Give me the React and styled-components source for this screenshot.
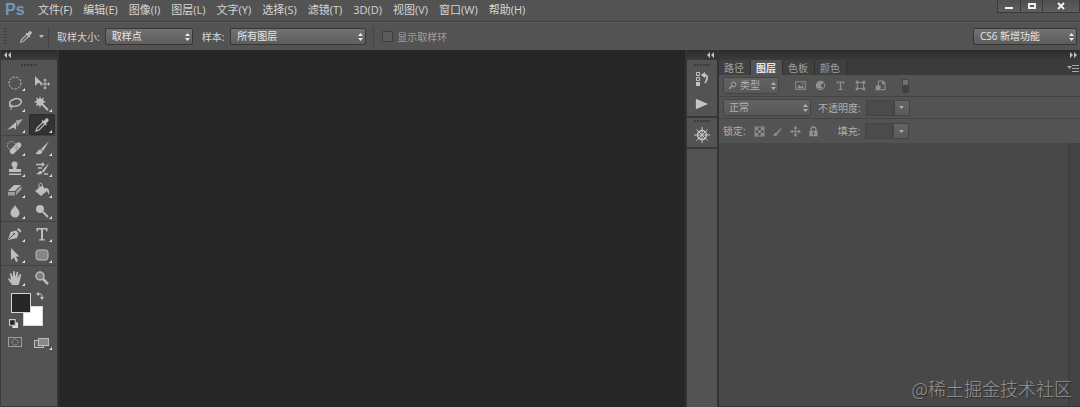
import React from "react";
import styled, { createGlobalStyle, css } from "styled-components";

const GlobalStyle = createGlobalStyle`
  * {
    box-sizing: border-box;
  }
  body {
    margin: 0;
    background-color: #262626;
    color: #d6d6d6;
    font-family: "Open Sans", "Noto Sans CJK SC", sans-serif;
    font-size: 10px;
    line-height: 16px;
  }
  button, select, input {
    font: inherit;
    color: inherit;
    margin: 0;
  }
  svg {
    display: block;
  }
`;

const Page = styled.div`
  min-height: 100vh;
  display: flex;
  flex-direction: column;
`;

const MenuBar = styled.header`
  height: 22px;
  display: flex;
  align-items: flex-start;
  justify-content: space-between;
  background-color: #535353;
  border-bottom: 1px solid #424242;
`;
const MenuLeft = styled.div`
  display: flex;
  align-items: center;
`;
const Logo = styled.span`
  width: 38px;
  padding-left: 5px;
  font-family: "Liberation Sans", sans-serif;
  font-size: 16px;
  font-weight: 700;
  line-height: 20px;
  color: #7398c0;
`;
const Menu = styled.nav`
  display: flex;
  gap: 11px;
`;
const MenuItem = styled.button`
  padding: 0;
  border: 0;
  background: none;
  font-size: 11px;
  line-height: 20px;
  white-space: nowrap;
`;
const WindowButtons = styled.div`
  display: flex;
  border: 1px solid #3a3a3a;
  border-top: 0;
`;
const WindowButton = styled.button`
  width: ${(props) => (props.$wide ? "37px" : "22px")};
  height: 12px;
  padding: 0;
  display: flex;
  align-items: center;
  justify-content: center;
  border: 0;
  border-left: ${(props) => (props.$first ? "0" : "1px solid #3a3a3a")};
  background: linear-gradient(#505050, #5e5e5e);
  color: #f0f0f0;
`;

const OptionsBar = styled.div`
  height: 28px;
  padding: 0 3px;
  display: flex;
  align-items: center;
  background-color: #535353;
  border-top: 1px solid #5c5c5c;
`;
const SideGrip = styled.div`
  width: 4px;
  height: 18px;
  margin-right: 12px;
  background: repeating-linear-gradient(#404040 0 1px, transparent 1px 3px);
`;
const ToolPreset = styled.button`
  width: 25px;
  padding: 0;
  display: flex;
  align-items: center;
  gap: 6px;
  border: 0;
  background: none;
  color: #bdbdbd;
`;
const Divider = styled.div`
  width: 1px;
  height: 20px;
  margin: 0 8px 0 4px;
  background-color: #444;
`;
const Label = styled.label`
  margin-right: ${(props) => props.$gap || 5}px;
  white-space: nowrap;
  color: ${(props) => props.$color || "#d6d6d6"};
`;
const SelectBox = styled.span`
  position: relative;
  width: ${(props) => props.$width}px;
  margin-right: ${(props) => props.$after || 0}px;
  color: ${(props) => (props.$dim ? "#b0b0b0" : "#e8e8e8")};
`;
const SelectInput = styled.select`
  display: block;
  width: 100%;
  height: 17px;
  padding: 0 12px 0 ${(props) => props.$pad || 6}px;
  appearance: none;
  border: 1px solid ${(props) => (props.$dim ? "#444" : "#363636")};
  border-radius: 2px;
  background: ${(props) =>
    props.$dim
      ? "linear-gradient(#626262, #585858)"
      : "linear-gradient(#727272, #5d5d5d)"};
  line-height: 15px;
  outline: 0;
`;
const SelectArrow = styled.svg`
  position: absolute;
  top: 5px;
  right: 3px;
  pointer-events: none;
`;
const SelectIcon = styled.span`
  position: absolute;
  top: 4px;
  left: 5px;
  pointer-events: none;
`;
const CheckBox = styled.input`
  appearance: none;
  width: 11px;
  height: 11px;
  margin-right: 4px;
  border: 1px solid #3d3d3d;
  border-radius: 1px;
  background-color: #5a5a5a;
`;
const Spacer = styled.div`
  flex: 1;
`;

const Workspace = styled.main`
  flex: 1;
  display: flex;
  background-color: #262626;
`;
const ToolPanel = styled.aside`
  width: 59px;
  display: flex;
  flex-direction: column;
  border: 1px solid #3a3a3a;
  border-top: 0;
  border-right: 2px solid #333;
  background-color: #535353;
`;
const CollapseBar = styled.div`
  height: 10px;
  padding: 0 3px;
  display: flex;
  align-items: center;
  justify-content: ${(props) => (props.$end ? "flex-end" : "flex-start")};
  background: linear-gradient(#2c2c2c, #3b3b3b);
`;
const CollapseButton = styled.button`
  padding: 0;
  border: 0;
  background: none;
  color: #c4c4c4;
`;
const TopGrip = styled.div`
  width: 16px;
  height: 2px;
  margin: ${(props) => props.$margin};
  background: repeating-linear-gradient(90deg, #3a3a3a 0 2px, transparent 2px 3px);
`;
const ToolGroup = styled.div`
  padding: 1px 3px 0 1px;
  display: grid;
  grid-template-columns: 26px 26px;
  gap: 0 1px;
  border-bottom: ${(props) => (props.$last ? "0" : "1px solid #424242")};
`;
const ToolButton = styled.button`
  position: relative;
  height: 21px;
  padding: 0;
  display: flex;
  align-items: center;
  justify-content: center;
  border: 1px solid transparent;
  border-radius: 2px;
  background: none;
  color: #bebebe;

  ${(props) =>
    props.$active &&
    css`
      background-color: #333;
      border-color: #2b2b2b;
    `}

  ${(props) =>
    props.$more &&
    css`
      &::after {
        content: "";
        position: absolute;
        right: 2px;
        bottom: 1px;
        border: solid transparent;
        border-width: 0 0 3px 3px;
        border-bottom-color: #e2e2e2;
      }
    `}
`;
const Swatches = styled.div`
  position: relative;
  height: 40px;
  margin-top: 2px;
`;
const Swatch = styled.button`
  position: absolute;
  top: ${(props) => props.$top}px;
  left: ${(props) => props.$left}px;
  width: 20px;
  height: 20px;
  padding: 0;
  border: 1px solid #d6d6d6;
  background-color: ${(props) => props.color};
`;
const SwatchAction = styled.button`
  position: absolute;
  top: ${(props) => props.$top}px;
  left: ${(props) => props.$left}px;
  padding: 0;
  border: 0;
  background: none;
  color: #c8c8c8;
`;

const Canvas = styled.section`
  flex: 1;
  background-color: #262626;
`;
const Dock = styled.aside`
  width: 34px;
  display: flex;
  flex-direction: column;
  border-left: 2px solid #333;
  border-right: 2px solid #333;
  background-color: #535353;
`;
const DockGroup = styled.div`
  display: flex;
  flex-direction: column;
  align-items: center;
  border-bottom: 2px solid #383838;
`;
const DockButton = styled.button`
  width: 28px;
  height: 25px;
  padding: 0;
  display: flex;
  align-items: center;
  justify-content: center;
  border: 0;
  background: none;
  color: #c4c4c4;
`;

const Panel = styled.aside`
  position: relative;
  width: 361px;
  display: flex;
  flex-direction: column;
`;
const Tabs = styled.div`
  height: 15px;
  display: flex;
  background-color: #3b3b3b;
`;
const Tab = styled.button`
  padding: 0 6px 0 5px;
  border: 0;
  border-right: 1px solid #303030;
  background-color: ${(props) => (props.$active ? "#535353" : "#404040")};
  color: ${(props) => (props.$active ? "#e8e8e8" : "#a0a0a0")};
  font-weight: ${(props) => (props.$active ? 700 : 400)};
  line-height: 14px;
`;
const PanelMenu = styled.button`
  margin-left: auto;
  padding: 0 1px;
  border: 0;
  background: none;
  color: #a8a8a8;
`;
const PanelRow = styled.div`
  height: ${(props) => (props.$last ? 24 : 22)}px;
  padding-left: 4px;
  display: flex;
  align-items: center;
  background-color: #535353;
  border-bottom: ${(props) => (props.$last ? "0" : "1px solid #444")};
`;
const IconRow = styled.div`
  margin: ${(props) => props.$margin};
  display: flex;
  align-items: center;
  gap: ${(props) => props.$gap}px;
`;
const IconButton = styled.button`
  padding: 0;
  border: 0;
  background: none;
  color: #909090;
`;
const FilterSwitch = styled.input`
  appearance: none;
  width: 7px;
  height: 14px;
  border: 1px solid #444;
  background: linear-gradient(#707070 0 5px, #404040 5px);
`;
const NumberInput = styled.input`
  width: 28px;
  height: 16px;
  padding: 0 2px;
  border: 1px solid #444;
  background-color: #4b4b4b;
`;
const DropButton = styled.button`
  width: 16px;
  height: 16px;
  padding: 0;
  display: flex;
  align-items: center;
  justify-content: center;
  border: 1px solid #454545;
  background: linear-gradient(#656565, #5a5a5a);
  color: #a8a8a8;
`;
const LayerList = styled.div`
  flex: 1;
  display: flex;
  justify-content: flex-end;
  background-color: #484848;
  border-bottom: 1px solid #333;
`;
const ScrollTrack = styled.div`
  width: 12px;
  background-color: #444;
  border-left: 2px solid #3e3e3e;
`;
const Watermark = styled.div`
  position: absolute;
  right: 8px;
  bottom: 6px;
  font-family: "Noto Sans CJK SC", sans-serif;
  font-size: 18px;
  font-weight: 300;
  line-height: 26px;
  white-space: nowrap;
  color: #959595;
  text-shadow: 1px 1px 1px #2a2a2a;
`;

const icons = {
  marquee: (
    <circle cx="8" cy="8" r="6" fill="none" stroke="currentColor" strokeDasharray="2.4 1.2" />
  ),
  move: (
    <>
      <path d="M1 1v10l3-3h4z" fill="currentColor" />
      <path d="M11 5v8M7 9h8" stroke="currentColor" />
      <path d="M11 3.5l2 2H9zM11 14.5l2-2H9zM5.5 9l2-2v4zM16 9l-2-2v4z" fill="currentColor" />
    </>
  ),
  lasso: (
    <g fill="none" stroke="currentColor" strokeWidth="1.5">
      <ellipse cx="8.5" cy="6.5" rx="6" ry="3.7" transform="rotate(-14 8.5 6.5)" />
      <path d="M3 9c-1.5 1-.5 2.5 1 2s1-2-.5-2M4.500 11c0 1.500-.5 2.500-1.500 3" strokeWidth="1" />
    </g>
  ),
  wand: (
    <>
      <path d="M6 0l1 3 3-1.5L9 4.500l3 1.500-3 1 1 3-3-1-1 3-1-3-3 1 1-3-3-1 3-1.500L2 1.500 5 3z" fill="currentColor" />
      <path d="M8.5 8.5L14 14" stroke="currentColor" strokeWidth="2" />
    </>
  ),
  slice: (
    <>
      <path d="M0 13L9 5v8l-2-2.500z" fill="currentColor" />
      <path d="M9 3.500L16 2l-6 8z" fill="currentColor" opacity=".75" />
    </>
  ),
  eyedropper: (
    <>
      <path d="M2 14l1-3 6-6 2 2-6 6z" fill="none" stroke="currentColor" strokeWidth="1.2" />
      <path d="M7.500 4l1-1 1 1L12 1.500c1-1 3.500 1 2.500 2.500L12 6.500l1 1-1 1z" fill="currentColor" />
    </>
  ),
  heal: (
    <>
      <rect x="1.500" y="5.500" width="14" height="5.500" rx="2.500" transform="rotate(-45 8.500 8.200)" fill="currentColor" />
      <path d="M7.500 7.500h.8M9 6h.8M9 9h.8M10.500 7.500h.8" stroke="#555" />
      <circle cx="4.500" cy="5.500" r="4" fill="none" stroke="currentColor" strokeDasharray="1.5 1.2" />
    </>
  ),
  brush: (
    <path d="M15 1L9 7 7 9l2 2 2-3zM6.5 9.5C4 9 3.500 13 1 13.500c3 1.500 7 1 7.500-2z" fill="currentColor" />
  ),
  stamp: (
    <path d="M6 7c0-1.5-1.5-2-1.5-3.500a3 3 0 016 0C10.500 5 9.500 5.500 9.500 7v1H14v3H2V8h4zM2 12.500h12V14H2z" fill="currentColor" />
  ),
  history: (
    <>
      <path d="M15 2L9.500 8 8 10l1.500 1.500L12 8zM7 10c-2-.5-2.500 2-5 3 3 1 6 .5 6.500-2z" fill="currentColor" />
      <path d="M2 3.500h7M4 7h4M10 13h4" stroke="currentColor" strokeWidth="1.5" />
      <path d="M8 1l3 2.500L8 6z" fill="currentColor" />
    </>
  ),
  eraser: (
    <>
      <path d="M1 9l6-6h7L8 9z" fill="currentColor" />
      <path d="M1 10h7v3.500H1zM9 9.500L14.500 4v3.500L9 13z" fill="currentColor" opacity=".7" />
    </>
  ),
  bucket: (
    <>
      <path d="M1 9l7-5.500L13 9l-6 5z" fill="currentColor" />
      <path d="M5 7V3.500C5 .5 8.500.5 8.500 3.500V7" fill="none" stroke="currentColor" />
      <path d="M11 6c4 0 4.500 2 4 7-1.500-3-2-5-4-5z" fill="currentColor" />
    </>
  ),
  blur: <path d="M8 2c1 2.500 4.500 5 4.500 8a4.500 4.500 0 01-9 0C3.500 7 7 4.500 8 2z" fill="currentColor" />,
  dodge: (
    <>
      <circle cx="6" cy="6" r="4" fill="currentColor" />
      <path d="M9 9l5 5" stroke="currentColor" strokeWidth="2" />
    </>
  ),
  pen: (
    <>
      <path d="M1 14L3.500 6 9 4.500 11.500 7 10 12z" fill="currentColor" />
      <path d="M10 3.500L11.500 2 14.500 5 13 6.500z" fill="currentColor" />
      <path d="M2 13l4.500-4.500" stroke="#505050" />
      <circle cx="7" cy="8" r="1" fill="#505050" />
    </>
  ),
  type: (
    <path d="M2.500 2h11v3.500h-1L11.500 3.500H9V13l2 .5v1H5v-1l2-.5V3.500H4.500L3.500 5.500h-1z" fill="currentColor" />
  ),
  path: <path d="M4 1v12l3-2.500 2 4.500 2-1-2-4.500h3.500z" fill="currentColor" />,
  shape: (
    <rect x="2" y="3" width="12" height="10" rx="2.500" fill="#858585" stroke="currentColor" />
  ),
  hand: (
    <path d="M5 15c-1-2-3-4-4-6 1-1 2 0 3 1L3 4c0-1.200 1.500-1.200 1.700 0L6 7.500 6 2c0-1.200 1.700-1.200 1.800 0L8.200 7 9.500 2.500c.3-1.100 1.800-.8 1.600.4L10.500 8l2-3.500c.7-1 2-.3 1.600.8C13 9 13 12 11.500 15z" fill="currentColor" />
  ),
  zoom: (
    <>
      <circle cx="6" cy="6" r="4" fill="#7d7d7d" stroke="currentColor" strokeWidth="1.500" />
      <path d="M9 9l5 5" stroke="currentColor" strokeWidth="2.500" />
    </>
  ),
  mask: (
    <>
      <rect x="1.500" y="3.500" width="13" height="9" fill="none" stroke="currentColor" opacity=".7" />
      <circle cx="8" cy="8" r="3" fill="none" stroke="currentColor" strokeDasharray="1 1" />
    </>
  ),
  screen: (
    <>
      <rect x="0.500" y="6.500" width="9" height="7" fill="#666" stroke="currentColor" />
      <rect x="4.500" y="4.500" width="10" height="7" fill="#888" stroke="currentColor" />
    </>
  ),
  historyPanel: (
    <>
      <path d="M2.500 1.500h3v3h-3zM2.500 6.500h3v3h-3z" fill="none" stroke="currentColor" />
      <path d="M2 11h4v4H2z" fill="currentColor" />
      <path d="M9 4h1c4 0 4 4 1 8" fill="none" stroke="currentColor" strokeWidth="1.800" />
      <path d="M7 4l4-3v6z" fill="currentColor" />
    </>
  ),
  play: <path d="M1 2l14 6-14 6z" fill="currentColor" />,
  wheel: (
    <>
      <circle cx="8" cy="8" r="4.500" fill="none" stroke="currentColor" strokeWidth="1.500" />
      <path d="M8 0v16M0 8h16M2.500 2.500l11 11M13.500 2.500l-11 11" stroke="currentColor" />
    </>
  ),
  search: (
    <>
      <circle cx="10" cy="6" r="4" fill="none" stroke="currentColor" strokeWidth="1.500" />
      <path d="M7 9l-5 5" stroke="currentColor" strokeWidth="2" />
    </>
  ),
  image: (
    <>
      <path d="M1 2.500h14v11H1z" fill="none" stroke="currentColor" strokeWidth="1.500" />
      <path d="M3 12l3-5 3 3 2-2 2 4z" fill="currentColor" />
      <circle cx="11" cy="5.500" r="1" fill="currentColor" />
    </>
  ),
  adjust: (
    <>
      <circle cx="8" cy="8" r="6" fill="none" stroke="currentColor" strokeWidth="1.500" />
      <path d="M3.800 12.200a6 6 0 010-8.400 6 6 0 018.400 0L8 8l4.200 4.200z" fill="currentColor" />
    </>
  ),
  bounds: (
    <>
      <path d="M3.500 3.500h9v9h-9z" fill="none" stroke="currentColor" strokeWidth="1.500" />
      <path d="M1 1h4v4H1zM11 1h4v4h-4zM1 11h4v4H1zM11 11h4v4h-4z" fill="currentColor" />
    </>
  ),
  smart: (
    <>
      <path d="M5 8V1.500h6L14.500 5v9H9" fill="none" stroke="currentColor" strokeWidth="1.500" />
      <path d="M1 8h7v7H1zM10 2h4v4h-4z" fill="currentColor" />
    </>
  ),
  checker: (
    <>
      <path d="M1.500 1.500h13v13h-13z" fill="none" stroke="currentColor" strokeWidth="1.500" />
      <path d="M2 2h4v4H2zM10 2h4v4h-4zM6 6h4v4H6zM2 10h4v4H2zM10 10h4v4h-4z" fill="currentColor" />
    </>
  ),
  cross: (
    <>
      <path d="M8 3v10M3 8h10" stroke="currentColor" strokeWidth="1.500" />
      <path d="M8 0l3 4H5zM8 16l3-4H5zM0 8l4-3v6zM16 8l-4-3v6z" fill="currentColor" />
    </>
  ),
  lock: (
    <>
      <path d="M4.500 8V5a3.500 3.500 0 017 0v3" fill="none" stroke="currentColor" strokeWidth="2" />
      <path d="M2 7h12v8H2z" fill="currentColor" />
      <path d="M8 9v4" stroke="#505050" strokeWidth="2" />
    </>
  ),
};

const Icon = ({ name, size = 16 }) => (
  <svg width={size} height={size} viewBox="0 0 16 16" aria-hidden="true">
    {icons[name]}
  </svg>
);

const Chevrons = ({ right }) => (
  <svg width="7" height="6" viewBox="0 0 7 6" aria-hidden="true">
    <path
      d={right ? "M0 0l3 3-3 3zM4 0l3 3-3 3z" : "M3 0L0 3l3 3zM7 0L4 3l3 3z"}
      fill="currentColor"
    />
  </svg>
);

const Caret = () => (
  <svg width="5" height="3" viewBox="0 0 5 3" aria-hidden="true">
    <path d="M0 0h5L2.500 3z" fill="currentColor" />
  </svg>
);

const Select = ({ id, value, width, after, pad, dim, icon, label }) => (
  <SelectBox $width={width} $after={after} $dim={dim}>
    <SelectInput id={id} $pad={pad} $dim={dim} aria-label={label}>
      <option>{value}</option>
    </SelectInput>
    {icon && (
      <SelectIcon>
        <Icon name={icon} size={9} />
      </SelectIcon>
    )}
    <SelectArrow width="5" height="8" viewBox="0 0 5 8">
      <path d="M0 3l2.500-3L5 3zM0 5l2.500 3L5 5z" fill="currentColor" />
    </SelectArrow>
  </SelectBox>
);

const menus = [
  "文件(F)",
  "编辑(E)",
  "图像(I)",
  "图层(L)",
  "文字(Y)",
  "选择(S)",
  "滤镜(T)",
  "3D(D)",
  "视图(V)",
  "窗口(W)",
  "帮助(H)",
];

const toolGroups = [
  ["marquee", "move", "lasso", "wand", "slice", "eyedropper"],
  ["heal", "brush", "stamp", "history", "eraser", "bucket", "blur", "dodge"],
  ["pen", "type", "path", "shape"],
  ["hand", "zoom"],
];

const App = () => {
  return (
    <Page>
      <GlobalStyle />
      <MenuBar>
        <MenuLeft>
          <Logo>Ps</Logo>
          <Menu>
            {menus.map((item) => (
              <MenuItem key={item}>{item}</MenuItem>
            ))}
          </Menu>
        </MenuLeft>
        <WindowButtons>
          <WindowButton $first aria-label="最小化">
            <svg width="8" height="8">
              <path d="M0 5h8v2H0z" fill="currentColor" />
            </svg>
          </WindowButton>
          <WindowButton aria-label="最大化">
            <svg width="8" height="8">
              <path d="M1 2h6v4H1z" fill="none" stroke="currentColor" strokeWidth="2" />
            </svg>
          </WindowButton>
          <WindowButton $wide aria-label="关闭">
            <svg width="8" height="8">
              <path d="M1 1l6 6M7 1L1 7" stroke="currentColor" strokeWidth="2" />
            </svg>
          </WindowButton>
        </WindowButtons>
      </MenuBar>

      <OptionsBar>
        <SideGrip />
        <ToolPreset aria-label="吸管工具">
          <Icon name="eyedropper" size={14} />
          <Caret />
        </ToolPreset>
        <Divider />
        <Label htmlFor="sample-size">取样大小:</Label>
        <Select id="sample-size" value="取样点" width={88} after={9} />
        <Label htmlFor="sample" $gap={6}>
          样本:
        </Label>
        <Select id="sample" value="所有图层" width={136} after={3} />
        <Divider />
        <CheckBox type="checkbox" id="ring" disabled />
        <Label htmlFor="ring" $color="#a0a0a0">
          显示取样环
        </Label>
        <Spacer />
        <Select label="工作区" value="CS6 新增功能" width={104} />
      </OptionsBar>

      <Workspace>
        <ToolPanel>
          <CollapseBar>
            <CollapseButton aria-label="折叠工具">
              <Chevrons />
            </CollapseButton>
          </CollapseBar>
          <TopGrip $margin="4px 0 5px 20px" />
          {toolGroups.map((group, i) => (
            <ToolGroup key={group[0]} $last={i === toolGroups.length - 1}>
              {group.map((tool) => (
                <ToolButton
                  key={tool}
                  aria-label={tool}
                  $active={tool === "eyedropper"}
                  $more={tool !== "move" && tool !== "zoom"}
                >
                  <Icon name={tool} />
                </ToolButton>
              ))}
            </ToolGroup>
          ))}
          <Swatches>
            <Swatch aria-label="背景色" color="#ffffff" $top={16} $left={22} />
            <Swatch aria-label="前景色" color="#262626" $top={3} $left={10} />
            <SwatchAction aria-label="切换颜色" $top={2} $left={35}>
              <svg width="8" height="8" viewBox="0 0 8 8">
                <path d="M2 2h2c1.500 0 2 1 2 3" fill="none" stroke="currentColor" />
                <path d="M0 2l3-2v4zM4 5h4L6 8z" fill="currentColor" />
              </svg>
            </SwatchAction>
            <SwatchAction aria-label="默认颜色" $top={29} $left={8}>
              <svg width="9" height="9" viewBox="0 0 8 8">
                <path d="M3 3h5v5H3z" fill="#ddd" />
                <path d="M.5.5h5v5h-5z" fill="#222" stroke="currentColor" />
              </svg>
            </SwatchAction>
          </Swatches>
          <ToolGroup $last>
            <ToolButton aria-label="快速蒙版">
              <Icon name="mask" />
            </ToolButton>
            <ToolButton aria-label="屏幕模式" $more>
              <Icon name="screen" />
            </ToolButton>
          </ToolGroup>
        </ToolPanel>

        <Canvas />

        <Dock>
          <CollapseBar $end>
            <CollapseButton aria-label="展开面板">
              <Chevrons />
            </CollapseButton>
          </CollapseBar>
          <DockGroup>
            <TopGrip $margin="4px 0 0" />
            <DockButton aria-label="历史记录">
              <Icon name="historyPanel" />
            </DockButton>
            <DockButton aria-label="动作">
              <Icon name="play" size={14} />
            </DockButton>
          </DockGroup>
          <DockGroup>
            <TopGrip $margin="2px 0 0" />
            <DockButton aria-label="导航器">
              <Icon name="wheel" />
            </DockButton>
          </DockGroup>
        </Dock>

        <Panel>
          <CollapseBar $end>
            <CollapseButton aria-label="折叠面板">
              <Chevrons right />
            </CollapseButton>
          </CollapseBar>
          <Tabs>
            <Tab>路径</Tab>
            <Tab $active>图层</Tab>
            <Tab>色板</Tab>
            <Tab>颜色</Tab>
            <PanelMenu aria-label="面板菜单">
              <svg width="12" height="8" viewBox="0 0 12 8">
                <path d="M0 2h5L2.500 5z" fill="currentColor" />
                <path d="M5 1.500h7M5 4.500h7M5 7.500h7" stroke="currentColor" />
              </svg>
            </PanelMenu>
          </Tabs>
          <PanelRow>
            <Select label="筛选类型" value="类型" width={56} pad={16} icon="search" dim />
            <IconRow $margin="0 16px 0 16px" $gap={9}>
              {["image", "adjust", "type", "bounds", "smart"].map((name) => (
                <IconButton key={name} aria-label={name}>
                  <Icon name={name} size={11} />
                </IconButton>
              ))}
            </IconRow>
            <FilterSwitch type="checkbox" aria-label="图层过滤" />
          </PanelRow>
          <PanelRow>
            <Select label="混合模式" value="正常" width={88} after={7} pad={5} dim />
            <Label htmlFor="opacity" $color="#b0b0b0">
              不透明度:
            </Label>
            <NumberInput id="opacity" disabled />
            <DropButton aria-label="不透明度选项">
              <Caret />
            </DropButton>
          </PanelRow>
          <PanelRow $last>
            <Label as="span" $color="#b0b0b0" $gap={8}>
              锁定:
            </Label>
            <IconRow $margin="0 19px 0 0" $gap={7}>
              {["checker", "brush", "cross", "lock"].map((name) => (
                <IconButton key={name} aria-label={name}>
                  <Icon name={name} size={11} />
                </IconButton>
              ))}
            </IconRow>
            <Label htmlFor="fill" $color="#b0b0b0">
              填充:
            </Label>
            <NumberInput id="fill" disabled />
            <DropButton aria-label="填充选项">
              <Caret />
            </DropButton>
          </PanelRow>
          <LayerList>
            <ScrollTrack />
          </LayerList>
          <Watermark>@稀土掘金技术社区</Watermark>
        </Panel>
      </Workspace>
    </Page>
  );
};

export default App;
